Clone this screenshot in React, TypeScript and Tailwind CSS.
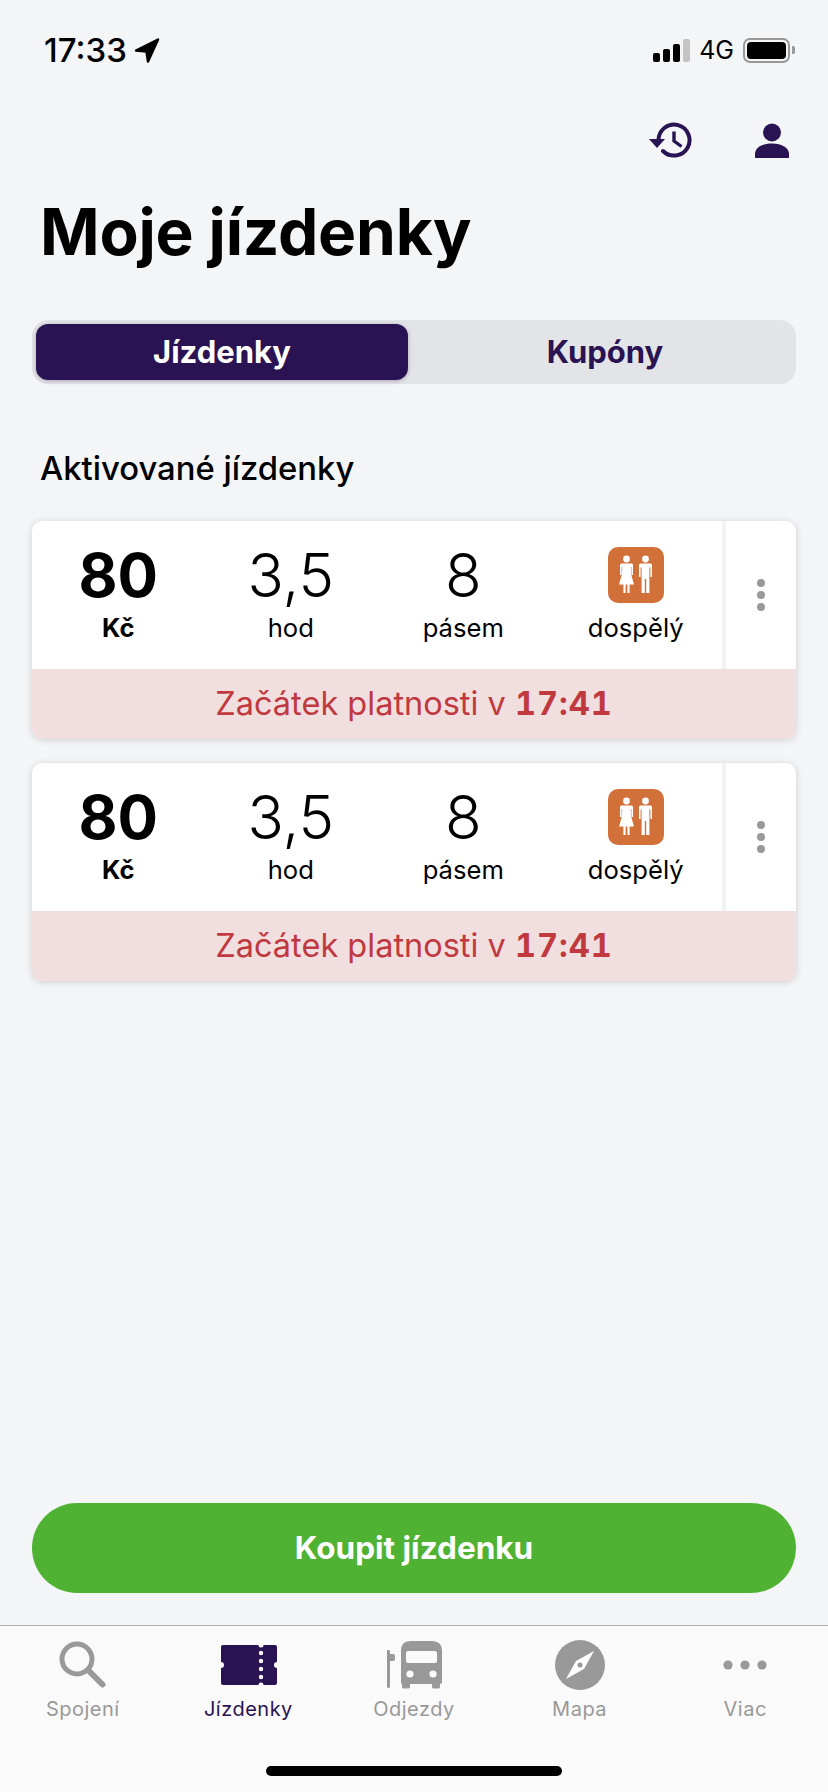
import type { ReactNode } from "react";

const tickets = [
  { price: "80", hours: "3,5", zones: "8", from: "17:41" },
  { price: "80", hours: "3,5", zones: "8", from: "17:41" },
];

function LocationArrow() {
  return (
    <svg width="26" height="25" viewBox="0 0 26 25" className="ml-[7px]">
      <path d="M24 1.5 L2 12.5 L12.5 13.5 L14 23.5 Z" fill="#000" stroke="#000" strokeWidth="2.5" strokeLinejoin="round" />
    </svg>
  );
}

function SignalBars() {
  return (
    <div className="flex items-end gap-[3px] h-[23px]">
      <div className="w-[7px] h-[9px] rounded-[2px] bg-black" />
      <div className="w-[7px] h-[13px] rounded-[2px] bg-black" />
      <div className="w-[7px] h-[18px] rounded-[2px] bg-black" />
      <div className="w-[7px] h-[23px] rounded-[2px] bg-[#c4c4c4]" />
    </div>
  );
}

function Battery() {
  return (
    <div className="flex items-center">
      <div className="w-[47px] h-[25px] rounded-[7px] border-2 border-[#999] p-[2px]">
        <div className="w-full h-full rounded-[4px] bg-black" />
      </div>
      <div className="ml-[2px] w-[3px] h-[8px] rounded-r-[2px] bg-[#999]" />
    </div>
  );
}

function HistoryIcon() {
  return (
    <svg width="44" height="36" viewBox="0 0 44 36" fill="none">
      <path d="M9.5 18 A15.5 15.5 0 1 1 14 29" stroke="#2a1352" strokeWidth="4" strokeLinecap="round" />
      <path d="M0 17 H16 L8 26 Z" fill="#2a1352" />
      <path d="M25 9.5 V19 L32.5 24.5" stroke="#2a1352" strokeWidth="3.4" />
    </svg>
  );
}

function PersonIcon() {
  return (
    <svg width="34" height="35" viewBox="0 0 34 35">
      <circle cx="17" cy="9.5" r="9" fill="#2a1352" />
      <path d="M0 35 V31 C0 25 7 20.5 17 20.5 C27 20.5 34 25 34 31 V35 Z" fill="#2a1352" />
    </svg>
  );
}

function AdultIcon() {
  return (
    <svg width="56" height="56" viewBox="0 0 56 56" className="rounded-[10px] bg-[#d2703a]">
      <g fill="#fff">
        <circle cx="18.5" cy="12" r="3.4" />
        <path d="M13.5 16.5 H23.5 Q25 16.5 25 18 V28 H23.4 V20 H22.8 L23 27 L26 37.5 H21.6 V46 H19.4 V37.5 H17.6 V46 H15.4 V37.5 H11 L14 27 L14.2 20 H13.6 V28 H12 V18 Q12 16.5 13.5 16.5 Z" />
        <circle cx="37.5" cy="12" r="3.4" />
        <path d="M32.5 16.5 H42.5 Q44 16.5 44 18 V30 H42.4 V20.5 H41.4 V46 H38.2 V32 H36.8 V46 H33.6 V20.5 H32.6 V30 H31 V18 Q31 16.5 32.5 16.5 Z" />
      </g>
    </svg>
  );
}

function TicketCard({ price, hours, zones, from }: { price: string; hours: string; zones: string; from: string }) {
  return (
    <div className="rounded-[10px] bg-white shadow-[0_1px_7px_rgba(0,0,0,0.16)] overflow-hidden">
      <div className="flex h-[148px]">
        <div className="grid grid-cols-4 flex-1 border-r-4 border-[#f2f3f5] text-black">
          <div className="flex flex-col items-center">
            <span className="mt-[24px] text-[60px] leading-[60px] font-bold">{price}</span>
            <span className="mt-[6px] text-[25.6px] leading-[34px] font-bold">Kč</span>
          </div>
          <div className="flex flex-col items-center">
            <span className="mt-[24px] text-[60px] leading-[60px] font-light">{hours}</span>
            <span className="mt-[6px] text-[25.6px] leading-[34px]">hod</span>
          </div>
          <div className="flex flex-col items-center">
            <span className="mt-[24px] text-[60px] leading-[60px] font-light">{zones}</span>
            <span className="mt-[6px] text-[25.6px] leading-[34px]">pásem</span>
          </div>
          <div className="flex flex-col items-center">
            <div className="mt-[26px] h-[58px]"><AdultIcon /></div>
            <span className="mt-[6px] text-[25.6px] leading-[34px]">dospělý</span>
          </div>
        </div>
        <div className="w-[70px] flex flex-col items-center gap-[4px] pt-[58px]">
          <div className="w-[8px] h-[8px] rounded-full bg-[#999]" />
          <div className="w-[8px] h-[8px] rounded-full bg-[#999]" />
          <div className="w-[8px] h-[8px] rounded-full bg-[#999]" />
        </div>
      </div>
      <div className="h-[70px] bg-[#f1dedf] flex items-center justify-center text-[32.5px] text-[#c0393f]">
        Začátek platnosti v&nbsp;<span className="font-bold tabular-nums tracking-[1px]">{from}</span>
      </div>
    </div>
  );
}

function SearchIcon() {
  return (
    <svg width="48" height="48" viewBox="0 0 48 48" fill="none" stroke="#999">
      <circle cx="18" cy="18" r="15" strokeWidth="5" />
      <path d="M29 29 L43.5 43.5" strokeWidth="6" strokeLinecap="round" />
    </svg>
  );
}

function TicketIcon() {
  return (
    <svg width="56" height="40" viewBox="0 0 56 40" className="ml-[2px]">
      <path
        d="M2 0 H37.500 A2.500 2.500 0 0 0 42.500 0 H54 A2 2 0 0 1 56 2 V17 A3 3 0 0 0 56 23 V38 A2 2 0 0 1 54 40 H42.500 A2.500 2.500 0 0 0 37.500 40 H2 A2 2 0 0 1 0 38 V23 A3 3 0 0 0 0 17 V2 A2 2 0 0 1 2 0 Z"
        fill="#2a1352"
      />
      <g fill="#fafafa">
        <circle cx="40" cy="8" r="2.2" />
        <circle cx="40" cy="16" r="2.2" />
        <circle cx="40" cy="24" r="2.2" />
        <circle cx="40" cy="32" r="2.2" />
      </g>
    </svg>
  );
}

function BusIcon() {
  return (
    <svg width="56" height="48" viewBox="0 0 56 48">
      <path d="M2 9 H4 A1.5 1.5 0 0 1 5 10.5 V13 H8 A2 2 0 0 1 10 15 V18 A2 2 0 0 1 8 20 H5 V45.5 A1.5 1.5 0 0 1 2 45.5 Z" fill="#999" transform="translate(-1,0)" />
      <path d="M24 0 H46 Q56 0 56 10 V41 Q56 43 54 43 V46 Q54 47.500 52 47.500 H48 Q46 47.500 46 46 V43 H24 V46 Q24 47.500 22 47.500 H18 Q16 47.500 16 46 V43 Q15 43 15 41 V10 Q15 0 24 0 Z" fill="#999" />
      <rect x="20" y="10" width="31" height="12" rx="2" fill="#fafafa" />
      <circle cx="24" cy="33" r="3.600" fill="#fafafa" />
      <circle cx="47" cy="33" r="3.600" fill="#fafafa" />
    </svg>
  );
}

function CompassIcon() {
  return (
    <svg width="50" height="50" viewBox="0 0 50 50">
      <circle cx="25" cy="25" r="25" fill="#999" />
      <path d="M39 11 L29 29 L11 39 L21 21 Z" fill="#fff" />
      <circle cx="25" cy="25" r="2.500" fill="#999" />
    </svg>
  );
}

function DotsIcon() {
  return (
    <svg width="44" height="10" viewBox="0 0 44 10" fill="#999">
      <circle cx="5" cy="5" r="4.600" />
      <circle cx="22" cy="5" r="4.600" />
      <circle cx="39" cy="5" r="4.600" />
    </svg>
  );
}

function NavItem({ icon, label, active }: { icon: ReactNode; label: string; active?: boolean }) {
  return (
    <div className="flex flex-col items-center">
      <div className="h-[50px] flex items-center justify-center">{icon}</div>
      <span className={`mt-[6px] text-[20px] leading-[26px] tracking-[0.5px] ${active ? "text-[#2a1352]" : "text-[#999]"}`}>
        {label}
      </span>
    </div>
  );
}

export default function App() {
  return (
    <div className="w-[828px] h-[1792px] flex flex-col bg-[#f4f5f7] font-['Inter',sans-serif] overflow-hidden">
      <div className="flex items-center justify-between h-[50px] mt-[25px] pl-[44px] pr-[33px]">
        <div className="flex items-center">
          <span className="text-[33px] leading-[40px] font-medium text-black">17:33</span>
          <LocationArrow />
        </div>
        <div className="flex items-center gap-[9px]">
          <SignalBars />
          <span className="text-[25px] leading-[30px] text-black">4G</span>
          <Battery />
        </div>
      </div>

      <div className="flex justify-end items-center gap-[62px] h-[36px] mt-[47px] pr-[39px]">
        <HistoryIcon />
        <PersonIcon />
      </div>

      <h1 className="mt-[36px] ml-[40px] text-[64px] leading-[76px] font-bold tracking-[-0.2px] text-black">Moje jízdenky</h1>

      <div className="mt-[50px] mx-[32px] h-[64px] p-[4px] rounded-[16px] bg-[#e3e4e8] flex">
        <div className="w-[372px] rounded-[12px] bg-[#2a1352] shadow-[0_1px_4px_rgba(42,19,82,0.3)] flex items-center justify-center text-[31px] font-bold text-white">
          Jízdenky
        </div>
        <div className="flex-1 pl-[10px] flex items-center justify-center text-[31px] font-bold text-[#2a1352]">Kupóny</div>
      </div>

      <h2 className="mt-[64px] ml-[40px] text-[32.8px] leading-[40px] font-medium text-black">Aktivované jízdenky</h2>

      <div className="mt-[33px] mx-[32px] flex flex-col gap-[24px]">
        {tickets.map((t, i) => (
          <TicketCard key={i} {...t} />
        ))}
      </div>

      <div className="mt-auto mx-[32px] mb-[32px] h-[90px] rounded-full bg-[#4fb233] flex items-center justify-center text-[31.500px] font-bold text-white">
        Koupit jízdenku
      </div>

      <div className="relative h-[167px] border-t border-[#b0b0b0] bg-[#fafafa]">
        <div className="grid grid-cols-5 pt-[14px]">
          <NavItem icon={<SearchIcon />} label="Spojení" />
          <NavItem icon={<TicketIcon />} label="Jízdenky" active />
          <NavItem icon={<BusIcon />} label="Odjezdy" />
          <NavItem icon={<CompassIcon />} label="Mapa" />
          <NavItem icon={<DotsIcon />} label="Viac" />
        </div>
        <div className="absolute left-[266px] bottom-[16px] w-[296px] h-[10px] rounded-full bg-black" />
      </div>
    </div>
  );
}
